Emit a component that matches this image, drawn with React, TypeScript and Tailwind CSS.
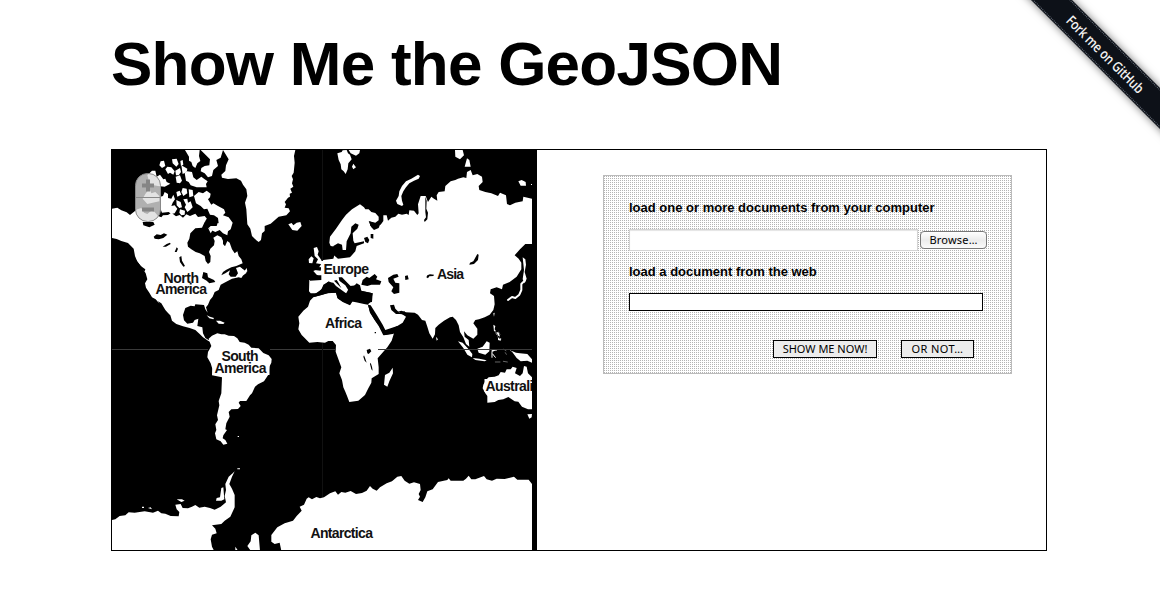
import React from "react";

const LAND: { name: string; at?: string; d: string[] }[] = [
  {
    name: "north-america",
    d: [
      "M12 188L28 185 40 193 56 199 66 207 80 196 88 190 100 186 108 200 118 204 130 194 140 198 150 210 160 214 165 208 180 207 190 200 204 211 215 207 225 215 235 205 246 210 262 203 270 213 290 210 298 220 290 228 282 245 262 247 247 262 244 278 238 290 240 302 250 310 263 318 275 322 290 330 293 345 300 354 307 348 308 330 303 318 307 308 318 298 320 285 316 275 328 268 340 274 345 284 345 294 351 301 358 285 365 290 372 310 380 322 388 316 392 330 400 340 404 352 385 360 370 364 355 371 345 378 340 388 352 382 366 373 362 385 368 392 383 392 390 382 384 366 396 362 410 374 416 366 418 376 408 384 400 396 392 394 372 398 352 409 338 416 332 432 320 438 314 452 306 462 300 476 294 484 299 500 292 490 288 477 262 475 260 481 248 479 232 486 225 507 228 523 238 533 255 530 260 522 271 518 268 540 283 544 285 562 292 576 302 582 318 566 312 590 300 584 285 574 275 564 262 552 245 546 225 541 205 534 192 524 187 508 170 493 158 476 150 468 143 460 132 454 124 440 114 425 111 412 118 400 113 382 101 363 88 347 81 330 77 308 60 291 40 285 26 279 12 276Z",
    ],
  },
  {
    name: "arctic-islands",
    d: [
      "M231 12L275 12 273 30 277 45 268 52 262 66 254 60 250 48 243 44 243 32Z",
      "M278 12L345 12 338 35 325 42 330 60 316 72 312 90 300 94 290 82 278 76 280 66 290 60 304 58 306 40 294 28Z",
      "M192 40L206 38 212 54 205 62 194 52Z M217 45L224 42 226 56 219 60Z M158 46L168 44 172 60 162 66 154 58Z",
      "M118 88L132 74 142 74 146 92 156 86 166 100 172 98 176 108 187 113 170 122 150 120 128 116 122 102Z",
      "M172 70L178 62 190 64 200 76 196 86 186 80 180 84Z M202 74L216 66 219 78 212 88 204 88Z M220 58L238 68 236 78 224 84Z",
      "M230 80L238 76 252 78 256 94 266 102 280 92 290 100 299 106 294 114 296 124 266 124 248 118 242 108 234 104Z M203 92L216 88 222 104 216 112 206 110Z",
      "M224 126L236 128 238 142 226 150 220 138Z M205 138L215 134 220 146 208 152Z M242 130L254 132 256 150 244 154Z",
      "M104 158L112 144 124 128 130 142 142 138 154 150 154 166 134 170 118 174Z",
      "M157 152L165 150 170 138 180 144 180 156 190 158 196 146 201 160 194 170 190 180 200 178 208 188 200 202 190 204 182 198 162 200 158 190Z",
      "M226 160L238 158 240 170 248 166 254 184 246 192 238 198 230 184 234 176Z",
      "M205 162L218 168 222 184 214 186 206 178Z M216 190L231 194 230 206 220 208 214 200Z",
      "M258 150L272 138 285 142 296 134 308 143 306 154 300 160 310 176 316 172 330 180 348 190 352 200 345 208 362 214 374 230 368 250 360 256 358 268 345 262 335 252 322 258 314 254 302 246 308 240 316 238 320 228 332 232 330 216 318 208 306 206 298 188 288 190 278 180 264 172Z",
      "M300 245L314 252 308 262Z",
      "M397 365L408 372 416 380 406 388 396 382Z",
      "M296 508L306 512 318 516 316 520 304 517Z M324 524L336 524 350 530 346 534 332 533Z",
    ],
  },
  {
    name: "greenland",
    d: [
      "M345 12L362 40 354 58 352 75 340 86 342 95 360 99 385 97 399 104 405 116 415 130 418 150 411 170 415 190 418 235 427 248 432 270 445 283 452 288 459 282 462 262 470 255 470 240 488 233 512 212 535 208 546 196 542 187 530 185 534 175 530 168 540 155 546 152 545 143 552 140 547 128 556 122 552 112 555 100 551 90 557 80 560 50 558 30 562 12Z",
      "M541 235L551 231 556 238 566 230 577 228 581 240 568 254 553 252Z",
    ],
  },
  {
    name: "south-america",
    d: [
      "M302 578L312 569 328 562 340 565 350 565 362 569 378 570 388 577 395 588 410 590 422 596 430 605 452 607 466 621 482 628 491 639 490 650 484 662 482 685 468 706 450 715 441 722 432 742 426 748 415 765 396 765 392 770 398 780 390 789 370 790 362 798 365 812 355 832 352 850 357 852 346 868 344 877 352 882 358 893 346 896 338 886 325 880 321 862 325 852 322 835 330 822 327 808 334 778 332 765 340 742 342 694 312 688 313 668 308 652 298 634 300 618 310 600 306 590Z",
      "M342 885L352 886 352 893Z M389 870h4v3h-4z",
    ],
  },
  {
    name: "europe-islands",
    at: "translate(426 0)",
    d: [
      "M262 22L275 18 278 13 290 12 294 22 300 26 305 40 295 52 293 70 287 84 281 76 274 70 272 55 266 42Z",
      "M296 12L330 12 328 22 318 29 302 22Z M306 62L310 53 318 64 310 70Z",
      "M191 306L201 303 206 316 203 326 214 342 216 355 198 352 204 340 194 330Z M176 340L184 331 191 337 187 352 177 351Z",
    ],
  },
  {
    name: "eurasia",
    d: [
      "M756 175L768 184 772 190 782 190 790 198 802 201 812 212 812 223 802 230 784 226 787 240 800 245 810 238 818 236 826 225 826 208 836 208 840 224 850 215 862 212 871 203 882 206 896 203 902 207 904 193 918 194 928 207 932 202 930 175 938 150 953 150 960 168 970 152 978 158 988 164 986 148 992 138 1010 136 1012 120 1028 106 1042 102 1050 98 1066 94 1075 96 1077 78 1088 72 1094 88 1108 84 1122 92 1124 108 1112 120 1114 132 1132 138 1150 142 1170 150 1176 140 1194 148 1197 174 1206 178 1222 170 1244 166 1246 152 1272 158 1272 294 1252 294 1236 310 1220 328 1232 338 1240 350 1240 370 1226 392 1205 408 1185 416 1182 430 1166 424 1148 430 1146 442 1158 450 1160 475 1156 492 1145 506 1130 514 1113 520 1102 522 1096 532 1108 548 1108 566 1096 578 1078 568 1068 556 1070 572 1082 582 1084 602 1074 594 1066 574 1056 558 1052 538 1044 522 1034 512 1026 514 1008 524 992 536 982 546 981 565 974 578 964 562 958 542 952 524 942 522 930 506 920 500 894 499 880 494 866 498 876 500 894 512 884 530 868 540 852 548 840 554 828 560 816 538 802 514 788 488 780 475 788 468 794 442 776 438 764 436 752 432 745 418 726 420 720 432 712 446 702 430 690 408 686 402 678 404 690 416 714 440 706 444 690 430 676 414 662 406 650 416 640 430 626 442 608 442 603 436 604 402 636 402 638 394 626 386 616 375 628 370 636 360 646 342 676 338 682 318 690 304 668 300 664 290 666 272 684 248 702 222 714 206 732 190 744 182Z",
    ],
  },
  {
    name: "africa",
    at: "translate(426 402)",
    d: [
      "M190 52L215 45 232 40 258 38 264 56 282 66 300 74 304 64 325 68 342 72 354 74 360 98 374 120 386 138 400 166 432 160 425 182 412 202 400 215 383 235 386 262 386 282 365 295 364 308 355 325 345 345 325 362 298 366 292 350 286 335 280 322 276 300 268 280 274 262 266 240 257 215 258 195 248 183 235 183 225 188 202 186 178 188 164 174 155 165 145 148 148 130 145 110 160 92 174 80 180 62Z",
      "M428 263L429 280 418 304 412 320 402 314 405 285 418 278Z",
    ],
  },
  {
    name: "asia-islands",
    at: "translate(846 0)",
    d: [
      "M84 86L90 90 86 98 72 104 58 112 48 124 40 136 34 150 36 164 40 176 36 180 22 174 18 164 26 150 28 136 36 120 48 106 64 98Z",
      "M195 12L218 12 222 28 210 40 196 32Z M231 37L238 42 242 62 224 62Z M385 106L395 102 407 108 408 119 392 119Z M423 114h3v3h-3z",
      "M138 572L144 580 140 584Z M204 586L218 590 236 610 247 624 246 634 232 626 220 606Z M248 636L268 638 290 643 284 646 256 642Z",
      "M262 608L278 602 290 586 299 590 298 616 286 626 266 620Z M364 614L378 620 390 622 412 624 426 640 426 650 412 644 392 646 380 636Z",
      "M310 536L316 540 314 550 318 556 312 556Z M316 560L326 558 330 572 320 566Z M324 574L334 578 332 584 324 582Z M310 502L314 500 312 512Z",
      "M398 334L406 340 408 356 404 378 410 398 404 412 398 400 402 372Z",
      "M412 805L426 804 425 814 418 818Z",
    ],
  },
  {
    name: "australia",
    at: "translate(846 402)",
    d: [
      "M288 300L296 292 314 290 326 286 332 276 345 278 350 268 362 268 368 260 380 264 375 280 390 288 398 280 402 258 410 260 414 280 426 292 426 388 414 388 396 380 385 365 374 364 355 351 340 358 325 360 314 366 292 368 292 348 286 340 278 325 280 314Z",
    ],
  },
  {
    name: "antarctica",
    at: "translate(0 792)",
    d: [
      "M12 330L22 328 35 318 52 316 62 307 80 308 110 304 135 308 150 302 160 310 172 311 188 318 212 319 214 306 206 298 202 284 218 282 224 294 240 295 252 290 262 285 274 293 290 290 306 294 320 299 338 290 354 277 350 258 354 240 352 222 362 200 374 190 380 184 372 200 364 222 372 236 380 255 380 292 367 320 350 332 340 342 312 346 322 356 326 370 312 374 308 388 312 410 318 422 12 422Z",
      "M340 234L346 232 349 268 340 272 324 272 326 264 336 262Z M206 268L222 268 230 272 220 276Z M120 294L128 292 132 298Z M102 290h6v4h-6z M388 175h8v3h-8z",
      "M428 422L418 408 428 394 430 376 442 368 452 376 456 422Z M382 422V410L390 422Z",
      "M490 375L508 352 530 340 555 332 566 318 581 302 575 290 588 284 596 266 602 262 612 268 625 261 636 265 648 262 666 250 682 244 690 254 700 246 712 248 728 243 744 252 762 249 776 242 786 228 794 236 806 242 816 232 836 220 852 214 868 200 880 198 890 212 904 221 918 217 936 222 938 240 932 252 936 260 930 270 944 276 952 262 958 244 974 238 990 216 1018 210 1022 205 1028 212 1066 212 1074 206 1082 197 1090 208 1102 208 1128 198 1136 208 1152 212 1166 206 1190 207 1218 200 1228 209 1262 209 1272 222 1272 422 520 422 515 398 500 402 490 395Z",
    ],
  },
];

const WATER: string[] = [
  // Canadian lakes and inlets
  "M137 272L146 265 158 267 168 262 178 266 166 276 152 280 140 278Z M164 302L176 294 186 290 188 294 174 302Z M200 318L206 304 210 308 206 318Z M214 334L220 330 222 344 231 360 226 362 216 348Z",
  "M292 225L300 212 316 214 330 228 326 240 306 240Z M286 378L298 382 300 394 318 402 322 408 304 412 296 404 282 396Z",
  "M83 340L98 360 112 370 110 376 94 366 80 350Z M104 228L136 228 140 236 124 244 106 238Z",
  "M150 466L160 472 172 492 184 506 176 506 162 490Z",
  // Baltic, White Sea, and northern lakes
  "M676 300L690 292 702 296 704 312 714 312 716 286 728 262 730 242 742 232 752 236 748 248 734 262 736 284 740 292 768 286 768 292 746 300 742 316 726 334 690 338 676 326Z",
  "M768 276L778 272 784 282 780 292 772 288Z M788 264L796 264 796 278 788 276Z M782 225L800 232 816 236 812 246 798 252 790 244Z",
  "M616 388L640 388 640 402 606 404 606 396Z M620 362L640 364 638 374 620 372Z",
  // Mediterranean and Aegean
  "M616 446L640 432 646 416 660 408 676 410 684 420 712 440 722 446 722 434 712 418 694 404 692 394 702 394 718 410 730 422 734 442 744 440 738 420 746 412 756 418 760 434 794 442 792 468 774 470 734 466 726 478 704 468 688 456 684 440 664 440 642 446 620 452Z",
  // Black, Caspian and Aral seas
  "M764 402L776 392 784 396 800 384 808 392 804 400 820 406 816 416 790 416 778 420 760 416Z",
  "M840 396L856 386 868 384 872 392 856 398 862 410 874 412 874 440 858 444 850 436 856 424 842 408Z M891 390L899 388 902 400 892 402Z",
  // Red Sea and Persian Gulf
  "M780 476L788 478 806 506 824 536 832 552 868 540 870 556 854 564 828 568 820 548 800 522 786 498Z M846 478L858 476 862 488 874 500 890 496 894 506 876 504 864 504 850 492Z",
  // African lakes
  "M776 612L786 608 790 616 782 624 778 622Z M768 628L772 638 776 650 770 644 766 632Z M788 650L792 662 794 674 790 670 786 654Z M800 558h4v4h-4z",
  // Siberian gulf, Baikal and Balkhash
  "M952 152L956 164 955 188 960 200 958 220 950 228 948 222 954 214 952 198Z M1108 324L1112 326 1110 342 1098 354 1084 356 1086 350 1096 346Z M955 394L958 388 966 385 978 386 976 390 964 391 960 397Z",
];

const LABELS: { text: string; x: number; y: number; w: number }[] = [
  { text: "North", x: 163.5, y: 283, w: 35.5 },
  { text: "America", x: 155.5, y: 294, w: 51.5 },
  { text: "Europe", x: 323.5, y: 273.5, w: 45.5 },
  { text: "Asia", x: 437, y: 279, w: 27 },
  { text: "Africa", x: 325, y: 328, w: 37 },
  { text: "South", x: 221.5, y: 361, w: 37 },
  { text: "America", x: 214.5, y: 373, w: 52 },
  { text: "Australia", x: 485.5, y: 391, w: 55 },
  { text: "Antarctica", x: 310.5, y: 537.5, w: 62.5 },
];

function WorldMap() {
  return (
    <svg viewBox="112 150 420 400" className="block h-[400px] w-[420px]">
      <g transform="translate(108 146) scale(0.33333)">
        {LAND.map((region) => (
          <g key={region.name} transform={region.at} fill="#fff">
            {region.d.map((d) => (
              <path key={d} d={d} />
            ))}
          </g>
        ))}
        {WATER.map((d) => (
          <path key={d} d={d} fill="#000" />
        ))}
        <g fill="none" stroke="#fff" strokeLinecap="round" strokeLinejoin="round">
          <path d="M1200 462L1212 453 1222 456 1234 446 1240 432 1240 414 1250 404" strokeWidth="6" />
          <path d="M1152 634v-18l6-2m-4 10l8 10m-10-20l14-2" strokeWidth="3" />
          <path d="M1188 610l6 4m12-2l6 6m-50 30l14 0m10-2l12 2m-6-28l3 5" strokeWidth="3" stroke="#666" />
          <path d="M1162 556l6 10m4-8l4 8m-8 6l8 6" strokeWidth="3" stroke="#555" />
        </g>
      </g>
      <path d="M112 349.5H208M270 349.5H336M378 349.5H532" stroke="#3a3a3a" />
      <path d="M322.5 150V261M322.5 343V497" stroke="#111" />
      {/* Clear space behind labels that run past a coastline */}
      <path
        d="M321 261h48v14h-48zM220 350h40v12h-40zM212.500 362h57v13h-57zM484.500 379h20v13h-20zM163 273h30v10h-30z"
        fill="#fff"
      />
      <g className="font-['Liberation_Sans',Arial,sans-serif] text-[14px] font-bold">
        {LABELS.map((l) => (
          <text key={`${l.text}-${l.y}`} x={l.x} y={l.y} textLength={l.w} fill="#111">
            {l.text}
          </text>
        ))}
      </g>
      <g>
        <rect x="135.5" y="173.500" width="25" height="48" rx="12" fill="#dcdcdc" fillOpacity="0.8" stroke="#888" />
        <path d="M136 197.500h24" stroke="#888" />
        <path d="M148 179.500v12M142 185.500h12M142 209.500h12" stroke="#858585" strokeWidth="4" />
      </g>
    </svg>
  );
}

function GitHubRibbon() {
  return (
    <a className="absolute top-0 right-0 block h-[150px] w-[150px] overflow-hidden">
      <span className="absolute top-[38px] left-[-21px] flex h-[29px] w-[230px] rotate-45 flex-col justify-between bg-[#0d1118] py-px shadow-[0_0_9px_rgba(0,0,0,0.55)]">
        <span className="border-t border-dotted border-[#68707c]" />
        <span className="block scale-x-[0.84] pl-[5px] text-center font-['Open_Sans',sans-serif] text-[14px] leading-[20px] font-semibold tracking-[-0.3px] text-[#f2f2f2]">
          Fork me on GitHub
        </span>
        <span className="border-t border-dotted border-[#68707c]" />
      </span>
    </a>
  );
}

export default function App() {
  return (
    <div className="relative h-[593px] w-[1160px] overflow-hidden bg-white pl-[111px] font-['Liberation_Sans',Arial,sans-serif] text-black">
      <h1 className="h-[149px] pt-[28px] text-[62px] leading-[72px] font-bold tracking-[-0.75px] whitespace-nowrap">
        Show Me the GeoJSON
      </h1>
      <main className="flex h-[402px] w-[936px] border border-black">
        <div className="h-[400px] w-[425px] shrink-0 bg-black">
          <WorldMap />
        </div>
        <form
          className="mt-[25px] ml-[66px] h-[199px] w-[409px] border border-[#bbb] bg-[#b4b4b4] bg-[linear-gradient(90deg,transparent_1px,#fff_1px),linear-gradient(transparent_1px,#fff_1px)] bg-[length:2px_2px] pl-[25px]"
          onSubmit={(e) => e.preventDefault()}
        >
          <label className="mt-[24px] block h-[16px] text-[13px] leading-[16px] font-bold whitespace-nowrap">
            load one or more documents from your computer
          </label>
          <div className="mt-[13px] flex h-[22px] items-center gap-[2px]">
            <div className="h-[22px] w-[289px] border border-[#d4d4d4] bg-white shadow-[inset_0_1px_1px_#e4e4e4]" />
            <button
              type="button"
              className="h-[18px] w-[67px] rounded-[4px] border border-[#777] bg-linear-to-b from-white via-[#ececec] to-[#fafafa] font-['Noto_Sans',sans-serif] text-[11px] leading-[16px] tracking-[0.2px]"
            >
              Browse…
            </button>
          </div>
          <label className="mt-[13px] block h-[16px] text-[13px] leading-[16px] font-bold whitespace-nowrap">
            load a document from the web
          </label>
          <input type="text" className="mt-[13px] block h-[18px] w-[354px] border border-black bg-white" />
          <div className="mt-[29px] ml-[144px] flex gap-[24px] font-['Noto_Sans',sans-serif] text-[11px] leading-[16px]">
            <button type="submit" className="h-[18px] w-[104px] border border-black bg-[#ececec]">
              SHOW ME NOW!
            </button>
            <button type="button" className="h-[18px] w-[73px] border border-black bg-[#ececec] tracking-[0.4px]">
              OR NOT…
            </button>
          </div>
        </form>
      </main>
      <GitHubRibbon />
    </div>
  );
}
